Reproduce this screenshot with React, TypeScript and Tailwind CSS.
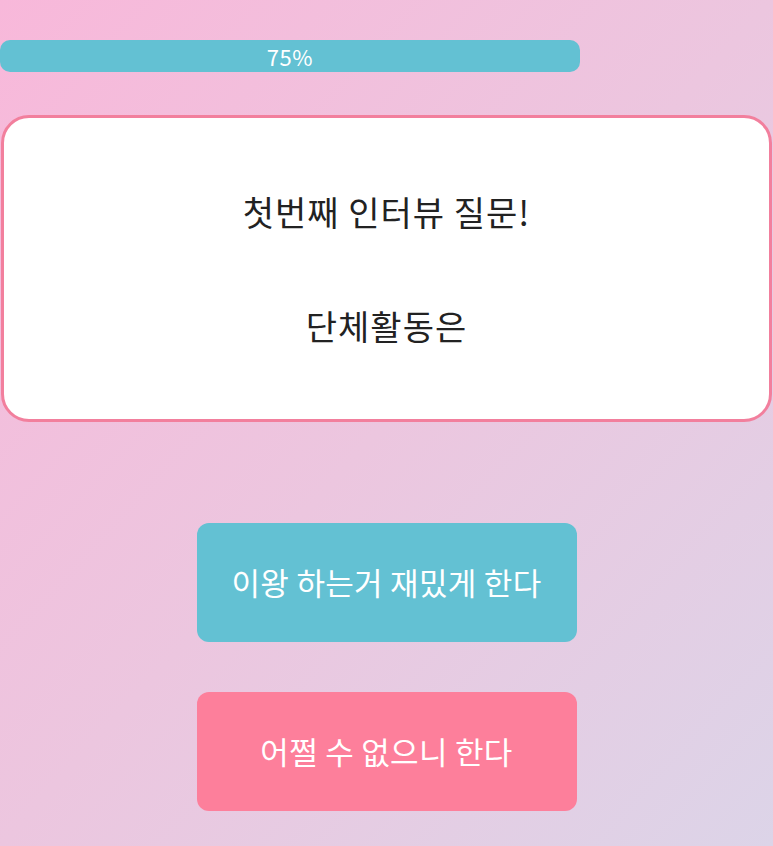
import React from "react";

export default function App() {
  const pct = 75;
  return (
    <div
      className="w-[773px] h-[846px] overflow-hidden bg-gradient-to-br from-[#f8b8da] via-[#ecc6df] to-[#dcd4e8] flex flex-col"
      style={{ fontFamily: '"Noto Sans CJK KR", "Noto Sans", sans-serif' }}
    >
      <div className="mt-[40px] h-[32px] w-full">
        <div
          className="h-full rounded-[10px] bg-[#63c1d3] flex items-center justify-center text-white text-[22px] leading-none tracking-[0.5px]"
          style={{ width: `${pct}%` }}
        >
          {pct}%
        </div>
      </div>

      <div className="mt-[43px] mx-[1px] h-[307px] rounded-[28px] border-[3px] border-[#f27f9d] bg-white flex flex-col items-center justify-center gap-[74px] text-[#222] text-[34px] leading-[40px] tracking-[1px]">
        <div>첫번째 인터뷰 질문!</div>
        <div>단체활동은</div>
      </div>

      <div className="mt-[101px] flex flex-col items-center gap-[50px]">
        <button className="w-[380px] h-[119px] rounded-[12px] bg-[#63c1d3] text-white text-[31px] tracking-[0.3px] flex items-center justify-center">
          이왕 하는거 재밌게 한다
        </button>
        <button className="w-[380px] h-[119px] rounded-[12px] bg-[#fd7f9b] text-white text-[31px] tracking-[0.3px] flex items-center justify-center">
          어쩔 수 없으니 한다
        </button>
      </div>
    </div>
  );
}
